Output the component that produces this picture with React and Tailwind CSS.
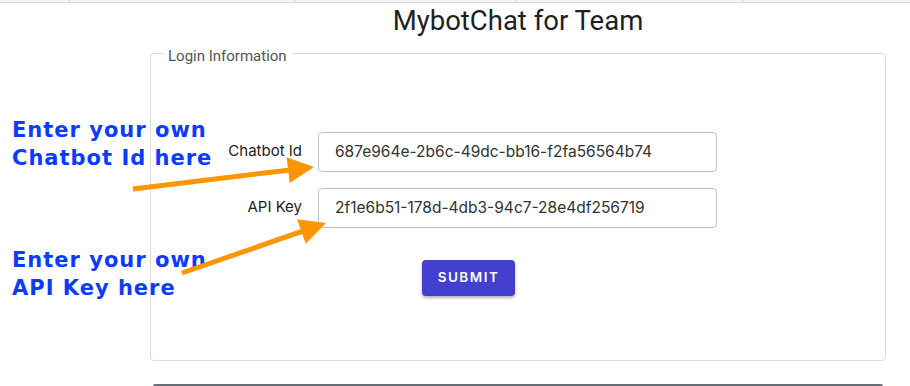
import React from "react";

function Arrow({ x1, y1, x2, y2 }) {
  // orange callout arrow: shaft + filled head ending at (x2,y2)
  const dx = x2 - x1;
  const dy = y2 - y1;
  const len = Math.sqrt(dx * dx + dy * dy);
  const ux = dx / len;
  const uy = dy / len;
  const headLen = 26;
  const headW = 13;
  const bx = x2 - ux * headLen;
  const by = y2 - uy * headLen;
  const p1 = `${bx - uy * headW},${by + ux * headW}`;
  const p2 = `${bx + uy * headW},${by - ux * headW}`;
  return (
    <g>
      <line x1={x1} y1={y1} x2={bx + ux * 2} y2={by + uy * 2} stroke="#ff9500" strokeWidth="5" />
      <polygon points={`${x2},${y2} ${p1} ${p2}`} fill="#ff9500" />
    </g>
  );
}

function Field({ label, value }) {
  return (
    <div className="flex items-center">
      <label className="w-[151px] mr-4 text-right text-[15px] text-[#222] font-['Inter',sans-serif]">
        {label}
      </label>
      <div className="w-[399px] h-[40px] border border-[#c4c4c4] rounded-[4px] flex items-center px-4 text-[15.5px] text-[#333] font-['Inter',sans-serif]">
        {value}
      </div>
    </div>
  );
}

export default function App() {
  return (
    <div className="relative w-[910px] h-[386px] overflow-hidden bg-white font-['Roboto',sans-serif]">

      {/* cut-off strip at very top */}
      <div className="h-[3px] bg-[#f3f3f3] border-b border-[#d9d9d9] flex">
        <div className="w-[70px] border-r border-[#cfcfcf]" />
        <div className="w-[225px] border-r border-[#cfcfcf]" />
        <div className="w-[221px] border-r border-[#cfcfcf]" />
        <div className="w-[227px] border-r border-[#cfcfcf]" />
      </div>

      <div className="ml-[150px] w-[736px]">
        <h1 className="text-center text-[27.5px] leading-[40px] text-[#1f1f1f] mt-[-2px]">
          MybotChat for Team
        </h1>

        <fieldset className="h-[319px] border border-[#dcdcdc] rounded-[4px] px-0 mt-[1px]">
          <legend className="ml-[12px] px-[5px] text-[15px] text-[#555]">
            <span className="inline-block translate-y-[3px]">Login Information</span>
          </legend>

          <div className="flex flex-col gap-[16px] mt-[67px]">
            <Field label="Chatbot Id" value="687e964e-2b6c-49dc-bb16-f2fa56564b74" />
            <Field label="API Key" value="2f1e6b51-178d-4db3-94c7-28e4df256719" />
          </div>

          <div className="mt-[32px] ml-[271px]">
            <button className="w-[93px] h-[36px] rounded-[4px] bg-[#4340d0] text-white text-[13.5px] font-semibold tracking-[1.5px] shadow-[0_2px_3px_rgba(0,0,0,0.3)] font-['Inter',sans-serif]">
              SUBMIT
            </button>
          </div>
        </fieldset>

        <div className="mt-[23px] mx-[3px] h-[4px] rounded-t-[2px] bg-[#666d75]" />
      </div>

      {/* annotations over the form */}
      <div className="absolute left-[12px] top-[116px] text-[21px] leading-[28px] tracking-[1px] font-bold text-[#0b3bff] font-['DejaVu_Sans',sans-serif]">
        <div>Enter your own</div>
        <div>Chatbot Id here</div>
      </div>
      <div className="absolute left-[12px] top-[246px] text-[21px] leading-[28px] tracking-[1px] font-bold text-[#0b3bff] font-['DejaVu_Sans',sans-serif]">
        <div>Enter your own</div>
        <div>API Key here</div>
      </div>

      <svg className="absolute left-0 top-0 pointer-events-none" width="910" height="386">
        <Arrow x1={133} y1={189} x2={314} y2={167} />
        <Arrow x1={182} y1={273} x2={326} y2={223} />
      </svg>
    </div>
  );
}
